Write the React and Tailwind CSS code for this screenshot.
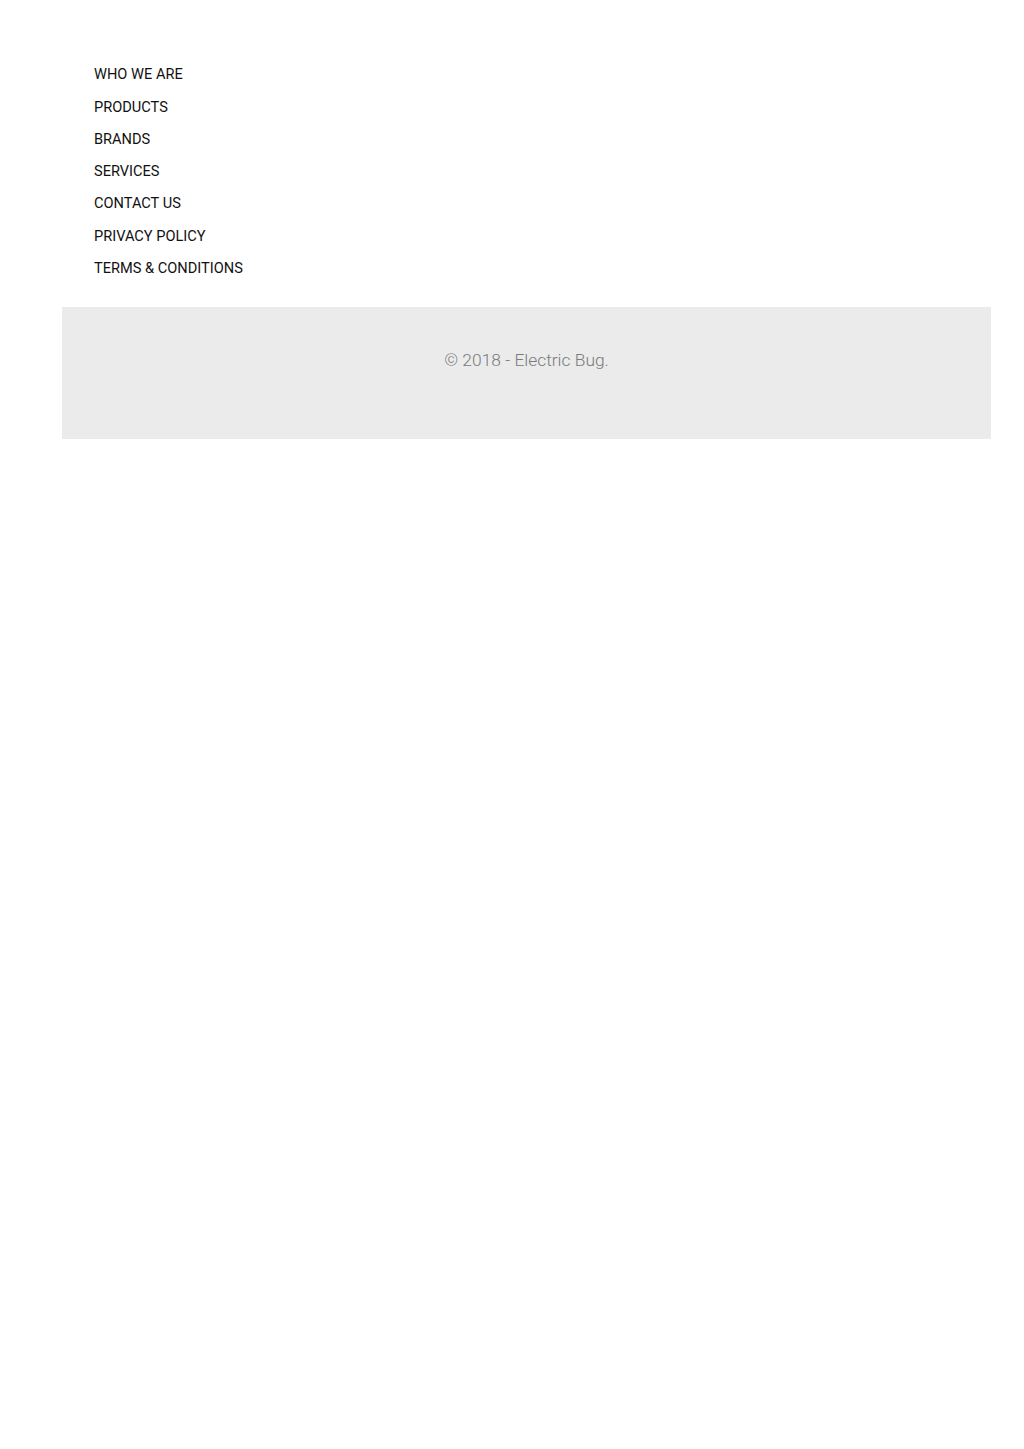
export default function App() {
  const links = [
    "WHO WE ARE",
    "PRODUCTS",
    "BRANDS",
    "SERVICES",
    "CONTACT US",
    "PRIVACY POLICY",
    "TERMS & CONDITIONS",
  ];

  return (
    <div
      className="min-h-[1449px] bg-white"
      style={{ fontFamily: "Roboto, 'Liberation Sans', sans-serif" }}
    >
      <footer className="pt-[59px] pl-[62px] pr-[33px]">
        <ul className="pl-[32px] flex flex-col">
          {links.map((l) => (
            <li key={l} className="h-[32.3px] flex items-center">
              <a href="#" className="text-[14.6px] text-[#111]">
                {l}
              </a>
            </li>
          ))}
        </ul>
        <div className="mt-[22px] h-[132px] bg-[#ebebeb] flex justify-center pt-[40px]">
          <p className="text-[17.4px] font-light text-[#7a7a7a] leading-[26px]">
            © 2018 - Electric Bug.
          </p>
        </div>
      </footer>
    </div>
  );
}
